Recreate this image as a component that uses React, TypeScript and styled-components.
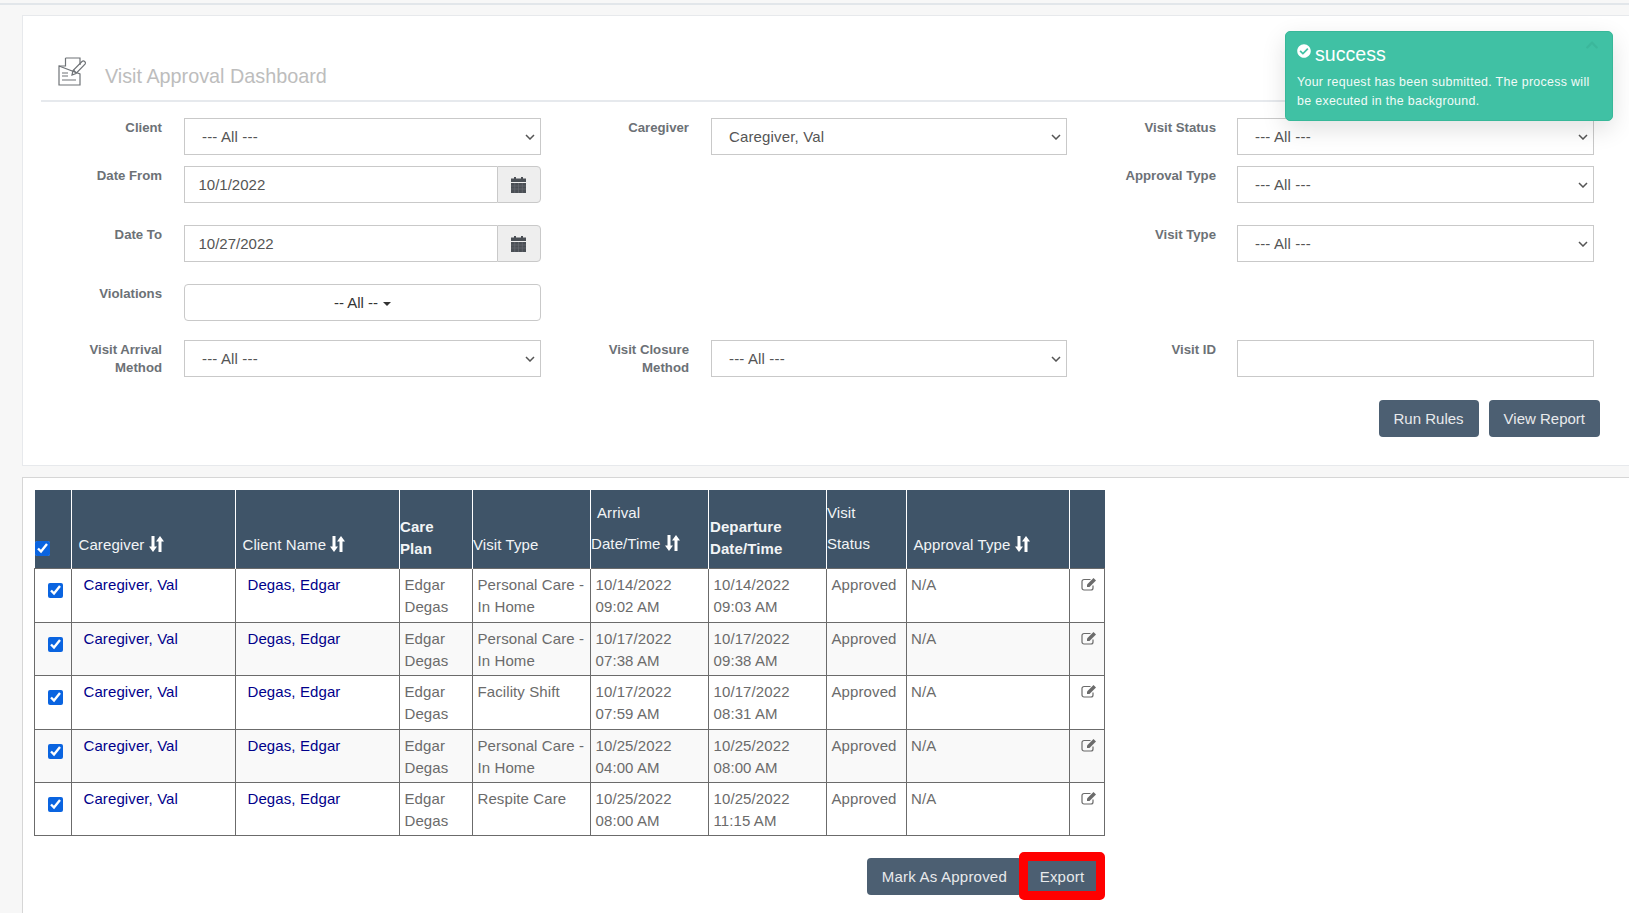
import React from "react";
import styled, { createGlobalStyle } from "styled-components";
import { FaCheckCircle, FaChevronUp } from "react-icons/fa";

const visits = [
  { visitType: "Personal Care - In Home", arrival: ["10/14/2022", "09:02 AM"], departure: ["10/14/2022", "09:03 AM"] },
  { visitType: "Personal Care - In Home", arrival: ["10/17/2022", "07:38 AM"], departure: ["10/17/2022", "09:38 AM"] },
  { visitType: "Facility Shift", arrival: ["10/17/2022", "07:59 AM"], departure: ["10/17/2022", "08:31 AM"] },
  { visitType: "Personal Care - In Home", arrival: ["10/25/2022", "04:00 AM"], departure: ["10/25/2022", "08:00 AM"] },
  { visitType: "Respite Care", arrival: ["10/25/2022", "08:00 AM"], departure: ["10/25/2022", "11:15 AM"] },
];

const columnWidths = [37, 164, 164, 73, 118, 118, 118, 80, 163, 35];

const SortIcon = () => (
  <SortSvg viewBox="0 0 15 16" aria-hidden="true">
    <path d="M2.500 0h3v10.500H8L4 16 0 10.500h2.500z" />
    <path d="M9.500 16h3V5.500H15L11 0 7 5.500h2.500z" />
  </SortSvg>
);

const DocIcon = () => (
  <svg width="28" height="29" viewBox="0 0 28 29" fill="none" stroke="#6f7377" strokeWidth="1.2" aria-hidden="true">
    <path d="M7.500 1H22v7M22 17v11H1V9z" />
    <path d="M7.500 1v8H1" />
    <path d="M4 16h6M4 19h6M4 23h14" />
    <path d="M14 18l1-4.500L24 4.500a2 2 0 0 1 3 2.600L18 16.500z" />
    <path d="M15.500 13l2.500 3" />
  </svg>
);

const CalendarIcon = () => (
  <svg width="15" height="16" viewBox="0 0 15 16" aria-hidden="true">
    <rect x="3" y="0" width="2" height="3" fill="#4a4f55" />
    <rect x="10" y="0" width="2" height="3" fill="#4a4f55" />
    <rect x="0" y="1.500" width="15" height="3.500" fill="#4a4f55" />
    <rect x="0" y="6" width="15" height="10" fill="#4a4f55" />
    <path d="M0 9h15M0 12h15M3.750 6v10M7.500 6v10M11.250 6v10" stroke="#6d7177" strokeWidth="0.6" />
  </svg>
);

const EditIcon = () => (
  <svg width="16" height="14" viewBox="0 0 16 14" aria-hidden="true">
    <path
      d="M12 8.500V11a2 2 0 0 1-2 2H3a2 2 0 0 1-2-2V4.500a2 2 0 0 1 2-2h6.500"
      fill="none"
      stroke="#6b6b6b"
      strokeWidth="1.200"
    />
    <path d="M6 7.500 12.500 1l2.500 2.500L8.500 10H6z" fill="#6b6b6b" />
  </svg>
);

const App = () => {
  return (
    <Page>
      <GlobalStyle />
      <TopBar />
      <Toast>
        <ToastClose>
          <FaChevronUp />
        </ToastClose>
        <ToastTitle>
          <FaCheckCircle />
          <span>success</span>
        </ToastTitle>
        <ToastText>Your request has been submitted. The process will be executed in the background.</ToastText>
      </Toast>
      <Main>
        <FilterPanel>
          <PanelHeader>
            <DocIcon />
            <PanelTitle>Visit Approval Dashboard</PanelTitle>
          </PanelHeader>
          <FilterGrid>
            <Label $col={1}>Client</Label>
            <Select>
              <option>--- All ---</option>
            </Select>
            <Label $col={3}>Caregiver</Label>
            <Select>
              <option>Caregiver, Val</option>
            </Select>
            <Label $col={5}>Visit Status</Label>
            <Select>
              <option>--- All ---</option>
            </Select>

            <Label $col={1}>Date From</Label>
            <DateGroup>
              <DateInput defaultValue="10/1/2022" />
              <DateAddon>
                <CalendarIcon />
              </DateAddon>
            </DateGroup>
            <Label $col={5}>Approval Type</Label>
            <Select>
              <option>--- All ---</option>
            </Select>

            <Label $col={1}>Date To</Label>
            <DateGroup>
              <DateInput defaultValue="10/27/2022" />
              <DateAddon>
                <CalendarIcon />
              </DateAddon>
            </DateGroup>
            <Label $col={5}>Visit Type</Label>
            <Select>
              <option>--- All ---</option>
            </Select>

            <Label $col={1}>Violations</Label>
            <MultiButton type="button">
              -- All --<Caret />
            </MultiButton>

            <Label $col={1}>
              Visit Arrival
              <br />
              Method
            </Label>
            <Select>
              <option>--- All ---</option>
            </Select>
            <Label $col={3}>
              Visit Closure
              <br />
              Method
            </Label>
            <Select>
              <option>--- All ---</option>
            </Select>
            <Label $col={5}>Visit ID</Label>
            <TextInput />
          </FilterGrid>
          <ReportActions>
            <Button type="button">Run Rules</Button>
            <Button type="button">View Report</Button>
          </ReportActions>
        </FilterPanel>

        <ResultsPanel>
          <VisitTable>
            <colgroup>
              {columnWidths.map((width, i) => (
                <col key={i} style={{ width }} />
              ))}
            </colgroup>
            <thead>
              <tr>
                <CheckHead>
                  <HeadCheckbox type="checkbox" defaultChecked />
                </CheckHead>
                <Th $pad>
                  Caregiver <SortIcon />
                </Th>
                <Th $pad>
                  Client Name <SortIcon />
                </Th>
                <Th $bold>
                  Care
                  <br />
                  Plan
                </Th>
                <Th>Visit Type</Th>
                <Th $tall>
                  <HeadIndent>Arrival</HeadIndent>
                  <br />
                  Date/Time <SortIcon />
                </Th>
                <Th $bold $inset>
                  Departure
                  <br />
                  Date/Time
                </Th>
                <Th $tall>
                  Visit
                  <br />
                  Status
                </Th>
                <Th $pad>
                  Approval Type <SortIcon />
                </Th>
                <Th />
              </tr>
            </thead>
            <tbody>
              {visits.map((visit, i) => (
                <Row key={i} $striped={i % 2 === 1}>
                  <CheckCell>
                    <RowCheckbox type="checkbox" defaultChecked />
                  </CheckCell>
                  <Td>
                    <NameLink href="#">Caregiver, Val</NameLink>
                  </Td>
                  <Td>
                    <NameLink href="#">Degas, Edgar</NameLink>
                  </Td>
                  <Td>
                    Edgar
                    <br />
                    Degas
                  </Td>
                  <Td>{visit.visitType}</Td>
                  <Td>
                    {visit.arrival[0]}
                    <br />
                    {visit.arrival[1]}
                  </Td>
                  <Td>
                    {visit.departure[0]}
                    <br />
                    {visit.departure[1]}
                  </Td>
                  <Td>Approved</Td>
                  <Td $tight>N/A</Td>
                  <EditCell>
                    <EditIcon />
                  </EditCell>
                </Row>
              ))}
            </tbody>
          </VisitTable>
          <TableActions>
            <MarkButton type="button">Mark As Approved</MarkButton>
            <ExportButton type="button">Export</ExportButton>
          </TableActions>
        </ResultsPanel>
      </Main>
    </Page>
  );
};

const GlobalStyle = createGlobalStyle`
  html, body {
    margin: 0;
    height: 100%;
    background: #f7f7f7;
    overflow: hidden;
  }
  * {
    box-sizing: border-box;
  }
  body, input, select, button {
    font-family: "Liberation Sans", Arial, sans-serif;
    font-size: 15px;
  }
`;

const Page = styled.div`
  position: relative;
  display: flex;
  flex-direction: column;
  height: 913px;
  overflow: hidden;
`;

const TopBar = styled.div`
  flex: none;
  height: 5px;
  border-bottom: 2px solid #e2e6ea;
`;

const Main = styled.main`
  flex: 1;
  display: flex;
  flex-direction: column;
  gap: 11px;
  padding: 10px 0 0 22px;
  min-height: 0;
`;

const FilterPanel = styled.section`
  flex: none;
  height: 451px;
  padding: 0 29px 0 18px;
  background: #fff;
  border: 1px solid #e7e9ec;
  border-right: 0;
`;

const PanelHeader = styled.header`
  display: flex;
  align-items: flex-end;
  height: 86px;
  padding: 0 0 14px 17px;
  border-bottom: 2px solid #e6e9ed;
`;

const PanelTitle = styled.h1`
  margin: 0 0 -2px 19px;
  font-size: 19.8px;
  font-weight: 400;
  line-height: 24px;
  color: #bdbdbd;
`;

const FilterGrid = styled.div`
  display: grid;
  grid-template-columns: 143px 357px 170px 356px 170px 357px;
  grid-template-rows: 48px 59px 59px 56px 37px;
  margin-top: 16px;
`;

const Label = styled.label<{ $col: number }>`
  grid-column: ${(props) => props.$col};
  padding: 1px ${(props) => (props.$col === 5 ? "21px" : "22px")} 0 0;
  font-size: 13.2px;
  font-weight: 700;
  line-height: 18px;
  text-align: right;
  color: #6c7176;
`;

const Select = styled.select`
  height: 37px;
  padding: 0 20px 0 17px;
  appearance: none;
  background: #fff
    url("data:image/svg+xml,%3Csvg xmlns='http://www.w3.org/2000/svg' width='10' height='6'%3E%3Cpath d='M1 1l4 4 4-4' fill='none' stroke='%23555' stroke-width='1.500'/%3E%3C/svg%3E")
    no-repeat right 5px center;
  border: 1px solid #c9c9c9;
  border-radius: 0;
  letter-spacing: 0.15px;
  color: #555;
`;

const DateGroup = styled.div`
  display: flex;
  height: 37px;
`;

const DateInput = styled.input`
  flex: 1;
  min-width: 0;
  padding: 0 13.5px;
  border: 1px solid #c9c9c9;
  border-right: 0;
  color: #555;
  outline: none;
`;

const DateAddon = styled.span`
  flex: none;
  display: flex;
  align-items: center;
  justify-content: center;
  width: 44px;
  padding-right: 2px;
  background: #eee;
  border: 1px solid #c9c9c9;
  border-radius: 0 4px 4px 0;
`;

const TextInput = styled.input`
  height: 37px;
  padding: 0 13px;
  border: 1px solid #c9c9c9;
  outline: none;
`;

const MultiButton = styled.button`
  height: 37px;
  padding: 0;
  background: #fff;
  border: 1px solid #c9c9c9;
  border-radius: 4px;
  color: #333;
`;

const Caret = styled.span`
  display: inline-block;
  margin-left: 5px;
  vertical-align: 2px;
  border-top: 4px solid #333;
  border-right: 4px solid transparent;
  border-left: 4px solid transparent;
`;

const ReportActions = styled.div`
  display: flex;
  justify-content: flex-end;
  gap: 10px;
  margin-top: 23px;
`;

const Button = styled.button`
  height: 37px;
  padding: 0 15px;
  background: #4c5f72;
  border: 0;
  border-radius: 4px;
  color: #e8eaec;
`;

const ResultsPanel = styled.section`
  flex: 1;
  padding: 12px 0 0 11px;
  background: #fff;
  border: 1px solid #d6d6d6;
  border-right: 0;
  border-bottom: 0;
`;

const VisitTable = styled.table`
  width: 1070px;
  table-layout: fixed;
  border-collapse: collapse;
  font-size: 15px;
  line-height: 22px;
  letter-spacing: 0.1px;
  color: #6b6b6b;
`;

const Th = styled.th<{ $pad?: boolean; $bold?: boolean; $tall?: boolean; $inset?: boolean }>`
  height: 78px;
  padding: 0 0 ${(props) => (props.$tall ? "9px" : props.$bold ? "8px" : "12px")}
    ${(props) => (props.$pad ? "6.5px" : props.$inset ? "1px" : "0")};
  background: #3f5468;
  border-right: 1px solid #fff;
  border-left: 1px solid #fff;
  font-weight: ${(props) => (props.$bold ? 700 : 400)};
  line-height: ${(props) => (props.$tall ? "31px" : "22px")};
  text-align: left;
  vertical-align: bottom;
  color: #f2f4f6;

  &:last-child {
    border-right: 0;
  }
`;

const HeadIndent = styled.span`
  padding-left: 6px;
`;

const CheckHead = styled(Th)`
  padding: 0 0 12px;
  border-left: 0;
  line-height: 0;
`;

const HeadCheckbox = styled.input`
  width: 15px;
  height: 15px;
  margin: 0;
  accent-color: #0a64e0;
`;

const Row = styled.tr<{ $striped: boolean }>`
  height: 53.4px;
  background: ${(props) => (props.$striped ? "#f9f9f9" : "#fff")};

  &:first-child {
    height: 54.4px;
  }
`;

const Td = styled.td<{ $tight?: boolean }>`
  padding: 5px 4px 3px ${(props) => (props.$tight ? "4px" : "4.5px")};
  border: 1px solid #6b6b6b;
  vertical-align: top;
`;

const CheckCell = styled(Td)`
  padding: 14px 0 0 13px;
  line-height: 0;
`;

const RowCheckbox = styled(HeadCheckbox)``;

const NameLink = styled.a`
  padding-left: 7px;
  color: #00008b;
  text-decoration: none;
`;

const EditCell = styled(Td)`
  padding: 8px 0 0 4px;
  text-align: center;
  line-height: 14px;
`;

const SortSvg = styled.svg`
  width: 15px;
  height: 16px;
  vertical-align: -2px;
  fill: #fff;
`;

const TableActions = styled.div`
  display: flex;
  align-items: center;
  justify-content: flex-end;
  width: 1071px;
  margin-top: 16px;
`;

const MarkButton = styled(Button)`
  letter-spacing: 0.22px;
`;

const ExportButton = styled(Button)`
  position: relative;
  height: 48px;
  width: 86px;
  margin-left: -3px;
  padding: 0;
  border: 9px solid #f00;
  border-radius: 5px;
  letter-spacing: 0.22px;
`;

const Toast = styled.aside`
  position: absolute;
  z-index: 2;
  top: 31px;
  left: 1285px;
  width: 328px;
  height: 90px;
  padding: 11px 11px 0 11px;
  background: #40c1a4;
  border: 1px solid #37b899;
  border-radius: 5px;
  box-shadow: 0 8px 24px rgba(0, 0, 0, 0.12);
  color: #fff;
`;

const ToastClose = styled.span`
  position: absolute;
  top: 6px;
  right: 13px;
  font-size: 14px;
  line-height: 14px;
  color: #3bb79b;
`;

const ToastTitle = styled.div`
  display: flex;
  align-items: flex-start;
  gap: 4px;
  height: 30px;
  font-size: 19.6px;
  line-height: 23px;

  svg {
    margin-top: 1px;
    font-size: 14px;
  }
`;

const ToastText = styled.p`
  margin: 0;
  font-size: 12.4px;
  letter-spacing: 0.32px;
  line-height: 19px;
  color: #f2fbf8;
`;

export default App;
